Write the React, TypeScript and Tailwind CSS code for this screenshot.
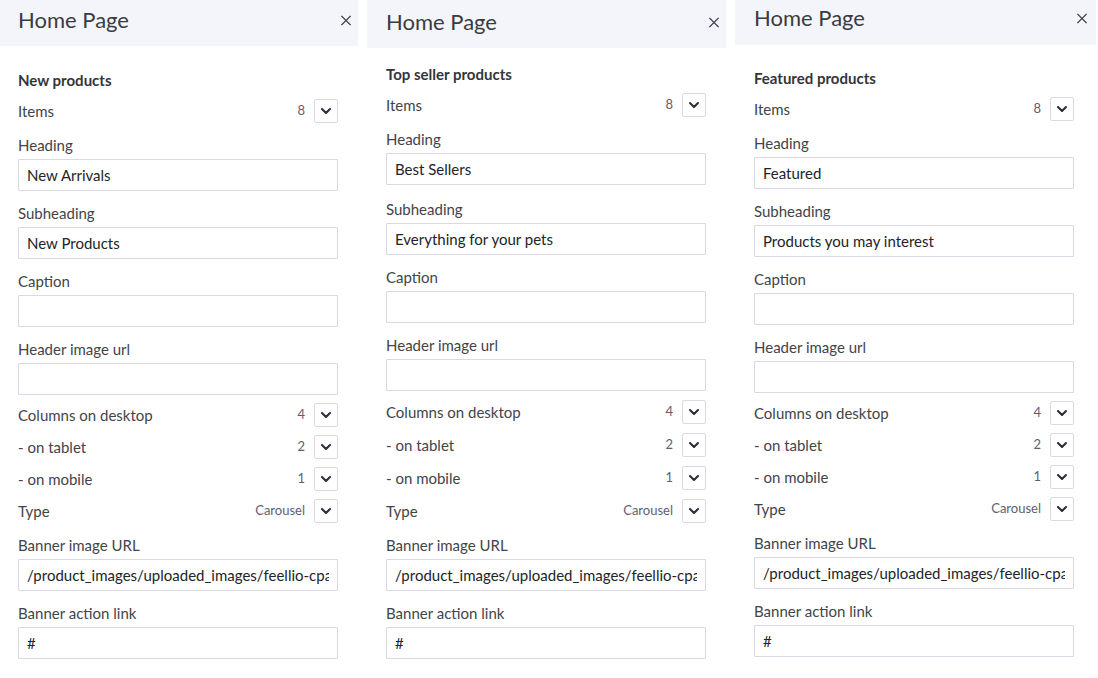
import { useState } from "react";

type PanelProps = {
  section: string;
  heading: string;
  subheading: string;
  width: string;
  headerClass: string;
  sectionTop: string;
  padX: string;
  wide?: boolean;
};

const panels: PanelProps[] = [
  {
    section: "New products",
    heading: "New Arrivals",
    subheading: "New Products",
    width: "w-[358px]",
    headerClass: "h-[46px] pt-[6px] pl-[18px] pr-[6px]",
    sectionTop: "mt-[23px]",
    padX: "pl-[18px] pr-[20px]",
  },
  {
    section: "Top seller products",
    heading: "Best Sellers",
    subheading: "Everything for your pets",
    width: "w-[359px]",
    headerClass: "h-[48px] pt-[8px] pl-[19px] pr-[6px]",
    sectionTop: "mt-[15px]",
    padX: "pl-[19px] pr-[20px]",
    wide: true,
  },
  {
    section: "Featured products",
    heading: "Featured",
    subheading: "Products you may interest",
    width: "w-[361px]",
    headerClass: "h-[45px] pt-[4px] pl-[19px] pr-[8px]",
    sectionTop: "mt-[22px]",
    padX: "pl-[19px] pr-[22px]",
  },
];

function Chevron() {
  return (
    <svg width="12" height="12" viewBox="0 0 12 12" fill="none">
      <path
        d="M2 4 L6 8 L10 4"
        stroke="#2b2f36"
        strokeWidth="2.1"
        strokeLinecap="round"
        strokeLinejoin="round"
      />
    </svg>
  );
}

function CloseIcon() {
  return (
    <svg width="13" height="13" viewBox="0 0 13 13" fill="none">
      <path d="M1.5 1.5 L11.5 11.5 M11.5 1.5 L1.5 11.5" stroke="#3a3d44" strokeWidth="1.5" />
    </svg>
  );
}

function SelectRow({ label, value, gap = "mt-2" }: { label: string; value: string; gap?: string }) {
  return (
    <div className={`${gap} flex h-6 items-center justify-between`}>
      <span className="text-[15px] text-[#42444a]">{label}</span>
      <div className="flex items-center gap-[9px]">
        <span className="text-[13px] text-[#5d6070]">{value}</span>
        <button className="flex h-6 w-6 items-center justify-center rounded-[2px] border border-[#d7d9e3] bg-white">
          <Chevron />
        </button>
      </div>
    </div>
  );
}

function Field({ label, value, top = "pt-[11px]" }: { label: string; value: string; top?: string }) {
  const [text, setText] = useState(value);
  return (
    <div className={top}>
      <div className="mb-[3px] h-[22px] text-[15px] leading-[22px] text-[#42444a]">{label}</div>
      <input
        value={text}
        onChange={(e) => setText(e.target.value)}
        className="block h-8 w-full rounded-[1px] border border-[#d7d9e5] bg-white px-[8px] text-[15px] text-[#222428] outline-none"
      />
    </div>
  );
}

function Panel(p: PanelProps) {
  // the middle panel is a few pixels taller in the capture
  const rowGap = p.wide ? "mt-[9px]" : "mt-2";
  return (
    <div className={`${p.width} shrink-0 bg-white`}>
      <div className={`${p.headerClass} flex items-start justify-between bg-[#f4f5fa]`}>
        <h1 className="h-[28px] text-[22px] leading-[28px] text-[#3a3c42]">Home Page</h1>
        <span className="flex h-[28px] w-[12px] items-center justify-center">
          <CloseIcon />
        </span>
      </div>
      <div className={p.padX}>
        <div className={`${p.sectionTop} h-[22px] text-[15px] font-bold leading-[22px] text-[#33353b]`}>
          {p.section}
        </div>
        <div className="mt-[2px]">
          <SelectRow label="Items" value="8" />
        </div>
        <Field label="Heading" value={p.heading} />
        <Field label="Subheading" value={p.subheading} top={p.wide ? "pt-[13px]" : "pt-[11px]"} />
        <Field label="Caption" value="" />
        <Field label="Header image url" value="" />
        <SelectRow label="Columns on desktop" value="4" gap={rowGap} />
        <SelectRow label="- on tablet" value="2" gap={rowGap} />
        <SelectRow label="- on mobile" value="1" gap={rowGap} />
        <SelectRow label="Type" value="Carousel" gap={rowGap} />
        <Field label="Banner image URL" value="/product_images/uploaded_images/feellio-cpanel-banner.jpg" />
        <Field label="Banner action link" value="#" />
      </div>
    </div>
  );
}

export default function App() {
  return (
    <div className="flex h-[678px] w-[1098px] gap-[9px] overflow-hidden bg-white font-['Lato','Noto_Sans',sans-serif]">
      {panels.map((p) => (
        <Panel key={p.section} {...p} />
      ))}
    </div>
  );
}
